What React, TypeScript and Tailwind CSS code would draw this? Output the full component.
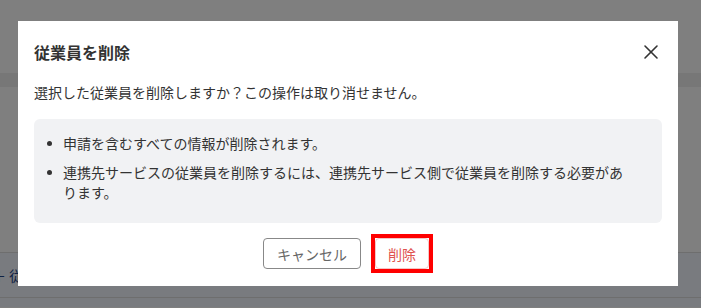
import { X } from 'lucide-react';

const font = { fontFamily: '"Noto Sans CJK JP", "Noto Sans", sans-serif' };

function BackgroundPage() {
  return (
    <div className="h-[308px] w-full bg-white overflow-hidden" style={font}>
      <div className="h-[73px] bg-white" />
      <div className="h-[14px] bg-[#eeeeee]" />
      <div className="h-[166px] bg-white border-b border-[#dcdcdc]" />
      <div className="h-[45px] bg-[#f2f6ff] border-b border-[#dcdcdc] flex items-center">
        <span className="-ml-[8px] text-sm text-[#1f4488]">＋ 従業員を招待</span>
      </div>
      <div className="h-[9px] bg-[#f2f6ff]" />
    </div>
  );
}

function DeleteEmployeeModal() {
  return (
    <div className="fixed inset-0 bg-black/50 flex items-start pt-[21px] pl-[18px]" style={font}>
      <div className="w-[660px] h-[265px] bg-white flex flex-col">
        <div className="flex items-center justify-between pl-4 pr-[15px] pt-[19px]">
          <h2 className="text-base font-bold text-[#333333] leading-6">従業員を削除</h2>
          <X className="w-6 h-6 text-[#333333]" strokeWidth={1.6} />
        </div>

        <p className="px-4 mt-[18px] text-sm leading-5 text-[#333333]">
          選択した従業員を削除しますか？この操作は取り消せません。
        </p>

        <div className="mx-4 mt-[17px] rounded-md bg-[#f1f2f4] pt-[14px] pb-[21px] pr-[32px]">
          <ul className="flex flex-col gap-[9px] text-sm leading-5 text-[#333333]">
            <li className="flex">
              <span className="w-[29px] h-5 shrink-0 flex items-center pl-[13px]">
                <span className="w-[5px] h-[5px] rounded-full bg-[#333333]" />
              </span>
              <span>申請を含むすべての情報が削除されます。</span>
            </li>
            <li className="flex">
              <span className="w-[29px] h-5 shrink-0 flex items-center pl-[13px]">
                <span className="w-[5px] h-[5px] rounded-full bg-[#333333]" />
              </span>
              <span>連携先サービスの従業員を削除するには、連携先サービス側で従業員を削除する必要があります。</span>
            </li>
          </ul>
        </div>

        <div className="mt-[11px] flex justify-center items-center gap-[10px]">
          <button className="h-[31px] px-[13px] rounded border border-[#888888] bg-white text-sm text-[#666666]">
            キャンセル
          </button>
          <span className="border-[4px] border-[#ff0000] flex">
            <button className="h-[31px] px-3 rounded border border-[#f3c6c6] bg-white text-sm text-[#e0524f]">
              削除
            </button>
          </span>
        </div>
      </div>
    </div>
  );
}

export default function App() {
  return (
    <div className="relative">
      <BackgroundPage />
      <DeleteEmployeeModal />
    </div>
  );
}
